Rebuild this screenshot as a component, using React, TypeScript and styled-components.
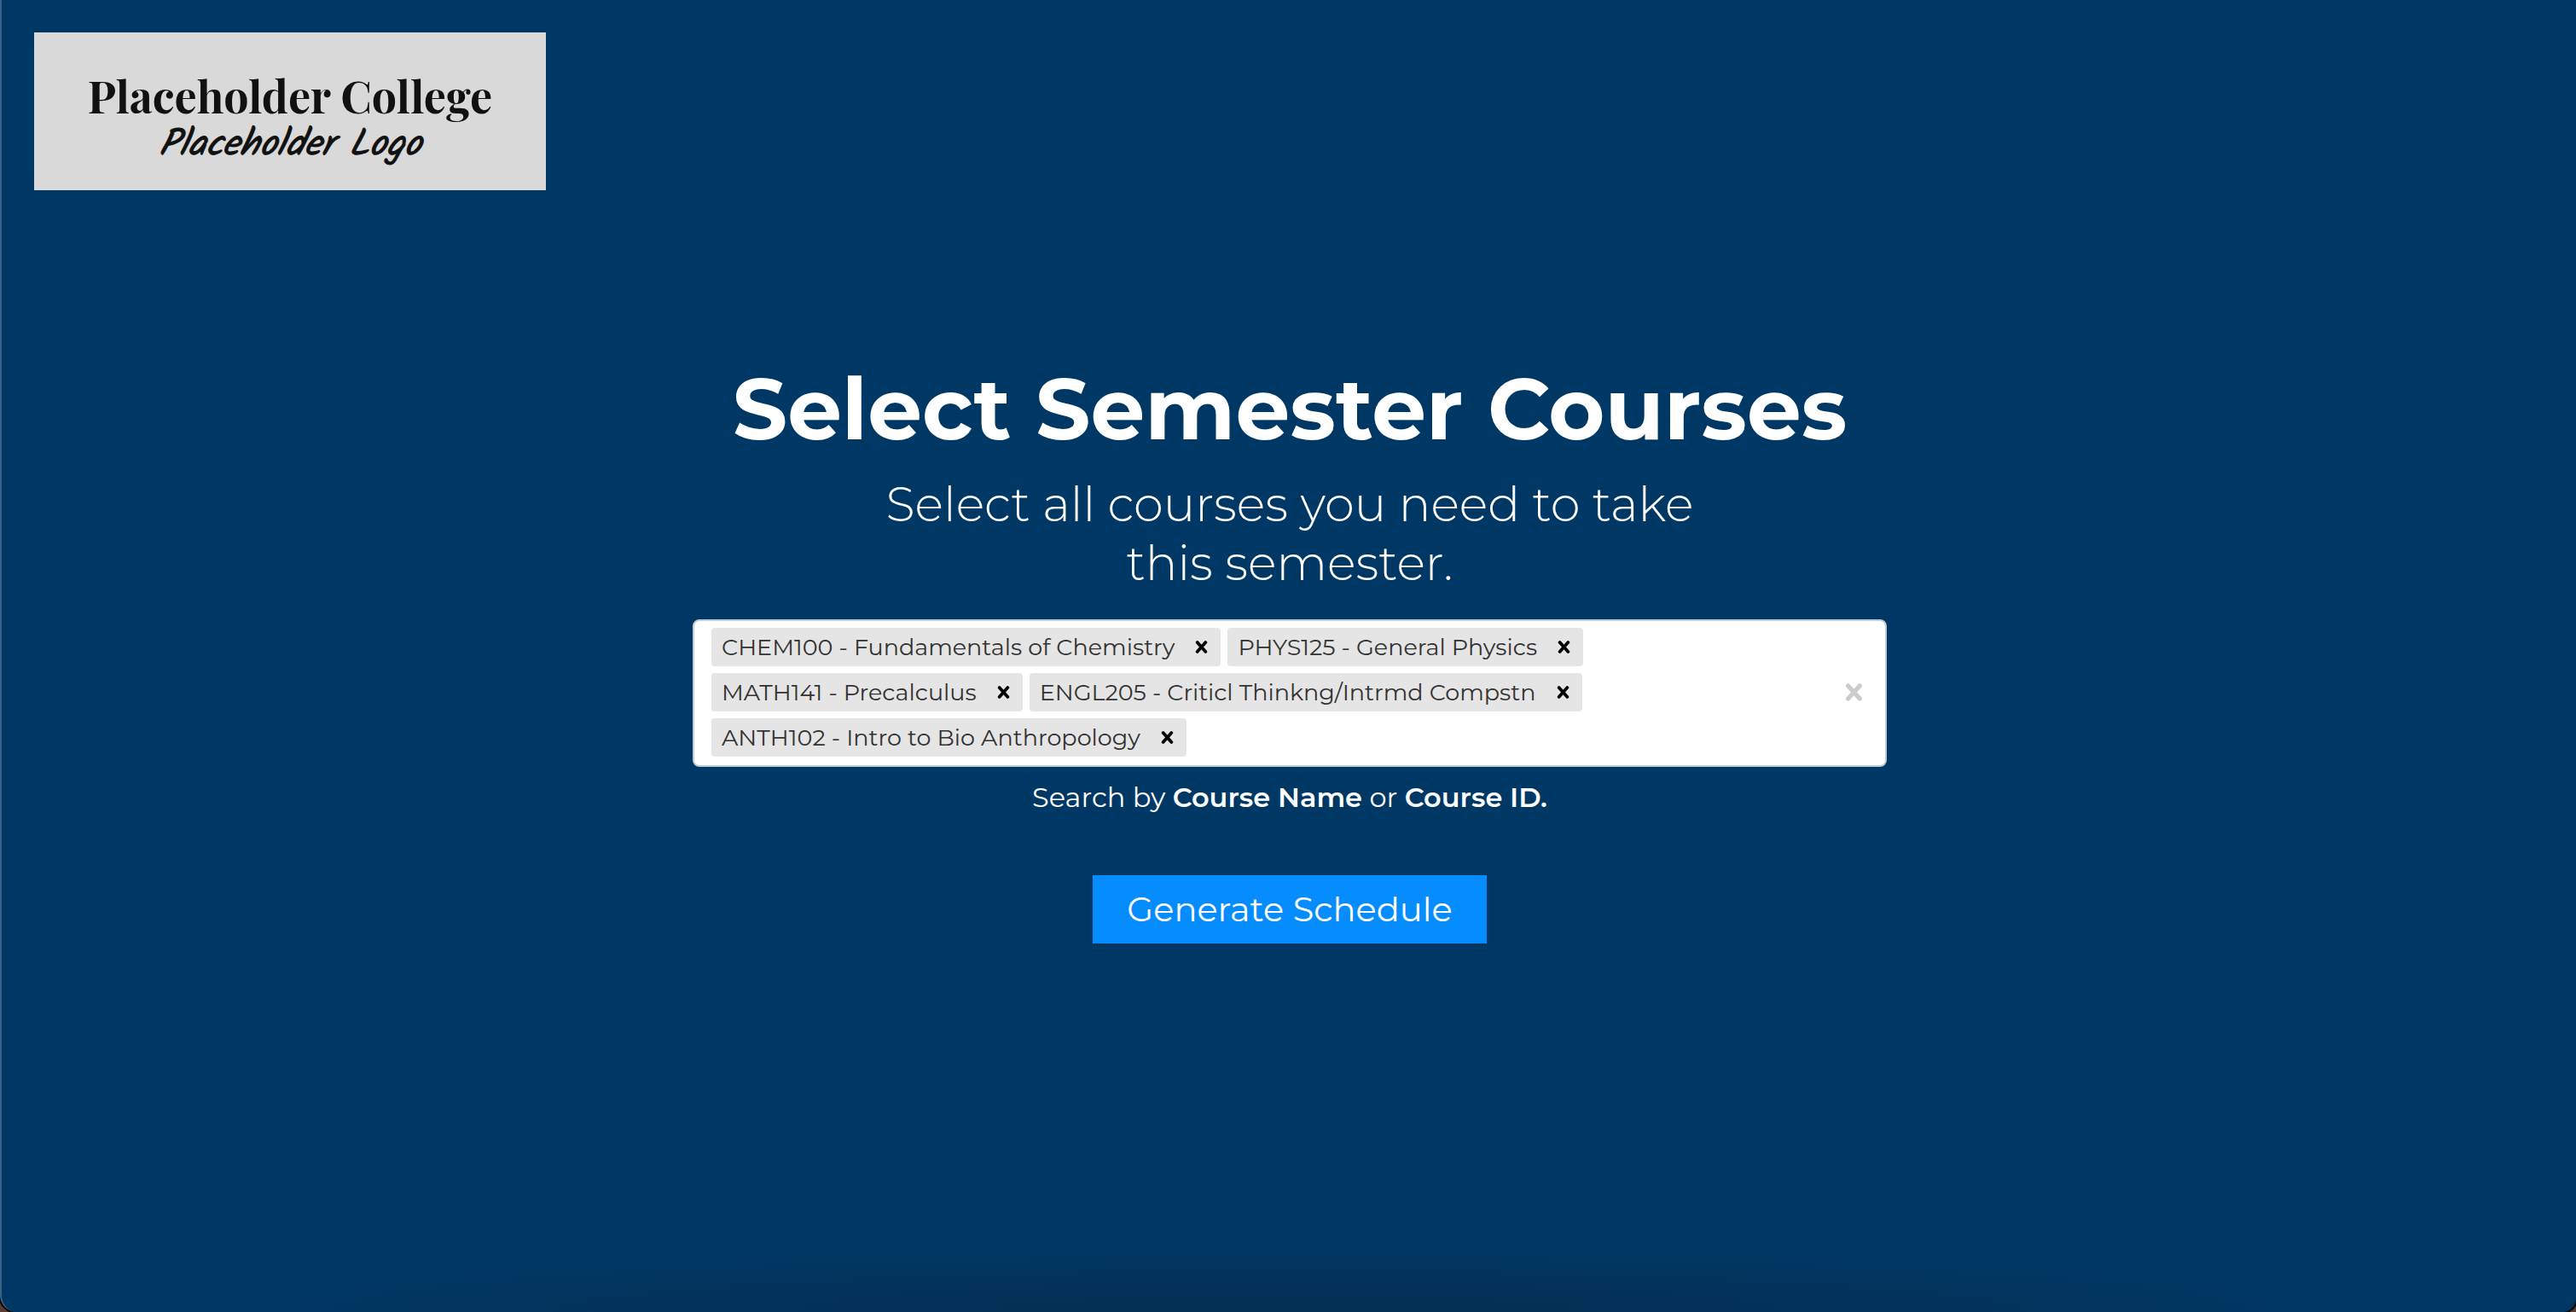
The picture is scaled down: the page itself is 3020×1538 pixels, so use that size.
import React, { useState } from 'react';
import styled, { createGlobalStyle } from 'styled-components';

const sans = `Montserrat, Inter, "Open Sans", sans-serif`;

const GlobalStyle = createGlobalStyle`
  *, *::before, *::after { box-sizing: border-box; }
  body { margin: 0; background: #5a3b30; }
  h1, p, ul { margin: 0; padding: 0; }
`;

const Page = styled.div`
  min-height: 100vh;
  border-left: 2px solid #3b6288;
  border-radius: 0 0 16px 20px;
  box-shadow: 0 0 0 2px #0a0a0a;
  background:
    radial-gradient(ellipse 44% 76px at 50% 100%, rgba(6, 44, 78, 0.7) 20%, rgba(0, 56, 101, 0)) no-repeat,
    #003865;
  color: #fff;
  font-family: ${sans};
`;

const Header = styled.header`
  padding: 38px;
`;

const Logo = styled.div`
  display: flex;
  flex-direction: column;
  align-items: center;
  justify-content: center;
  gap: 6px;
  width: 600px;
  height: 185px;
  padding-top: 16px;
  background: #d9d9d9;
  color: #111;
`;

const LogoName = styled.span`
  font: 700 52px/56px "Playfair Display", "Liberation Serif", serif;
`;

const LogoTag = styled.span`
  font: italic 400 44px/48px Kalam, "Caveat Brush", cursive;
  -webkit-text-stroke: 1px currentColor;
`;

const Main = styled.main`
  display: flex;
  flex-direction: column;
  align-items: center;
  padding: 158px 40px 80px 42px;
  text-align: center;
`;

const Title = styled.h1`
  font-size: 101px;
  font-weight: 700;
  line-height: 120px;
`;

const Subtitle = styled.p`
  max-width: 1000px;
  margin-top: 18px;
  font-size: 56px;
  font-weight: 300;
  line-height: 69px;
`;

const Select = styled.div`
  display: flex;
  align-items: center;
  width: 100%;
  max-width: 1400px;
  margin-top: 31px;
  padding: 8px 20px 10px;
  border: 2px solid #bfcdd6;
  border-radius: 8px;
  background: #fff;
`;

const Tags = styled.ul`
  display: flex;
  flex: 1;
  flex-wrap: wrap;
  gap: 8px;
  max-width: 1120px;
  list-style: none;
`;

const Tag = styled.li`
  display: flex;
  align-items: center;
  height: 45px;
  padding-left: 12px;
  border-radius: 4px;
  background: #e5e5e5;
  color: #333;
  font-size: 27px;
  line-height: 33px;
  white-space: nowrap;
`;

const IconButton = styled.button`
  display: flex;
  align-items: center;
  padding: 0 15px 0 24px;
  border: 0;
  background: none;
  color: #000;
  cursor: pointer;
`;

const ClearButton = styled(IconButton)`
  margin-left: auto;
  padding: 0 6px;
  color: #ccc;
`;

const SearchItem = styled.li`
  display: flex;
  flex: 1;
  min-width: 8px;
`;

const Search = styled.input`
  width: 100%;
  height: 45px;
  padding: 0;
  border: 0;
  outline: 0;
  background: none;
  color: #333;
  font: 27px/33px ${sans};
`;

const Hint = styled.label`
  margin-top: 16px;
  font-size: 32px;
  line-height: 40px;

  strong {
    font-weight: 600;
  }
`;

const Submit = styled.button`
  margin-top: 71px;
  padding: 16px 40px;
  border: 0;
  background: #058cff;
  color: #fff;
  font: 400 40px/48px ${sans};
  cursor: pointer;
`;

const Cross = ({ size, stroke }: { size: number; stroke: number }) => (
  <svg
    width={size}
    height={size}
    viewBox="0 0 16 16"
    fill="none"
    stroke="currentColor"
    strokeWidth={stroke}
    strokeLinecap="round"
    aria-hidden="true"
  >
    <path d="M2.8 2.2 13.2 13.8M13.2 2.2 2.8 13.8" />
  </svg>
);

const initialCourses = [
  'CHEM100 - Fundamentals of Chemistry',
  'PHYS125 - General Physics',
  'MATH141 - Precalculus',
  'ENGL205 - Criticl Thinkng/Intrmd Compstn',
  'ANTH102 - Intro to Bio Anthropology',
];

export default function App() {
  const [courses, setCourses] = useState(initialCourses);
  const remove = (course: string) => setCourses(courses.filter((c) => c !== course));

  return (
    <>
      <GlobalStyle />
      <Page>
        <Header>
          <Logo>
            <LogoName>Placeholder College</LogoName>
            <LogoTag>Placeholder Logo</LogoTag>
          </Logo>
        </Header>
        <Main>
          <Title>Select Semester Courses</Title>
          <Subtitle>Select all courses you need to take this semester.</Subtitle>
          <Select>
            <Tags>
              {courses.map((course) => (
                <Tag key={course}>
                  {course}
                  <IconButton type="button" aria-label={`Remove ${course}`} onClick={() => remove(course)}>
                    <Cross size={15} stroke={4} />
                  </IconButton>
                </Tag>
              ))}
              <SearchItem>
                <Search id="course-search" type="text" autoComplete="off" />
              </SearchItem>
            </Tags>
            <ClearButton type="button" aria-label="Clear all courses" onClick={() => setCourses([])}>
              <Cross size={21} stroke={4} />
            </ClearButton>
          </Select>
          <Hint htmlFor="course-search">
            Search by <strong>Course Name</strong> or <strong>Course ID.</strong>
          </Hint>
          <Submit type="button">Generate Schedule</Submit>
        </Main>
      </Page>
    </>
  );
}
